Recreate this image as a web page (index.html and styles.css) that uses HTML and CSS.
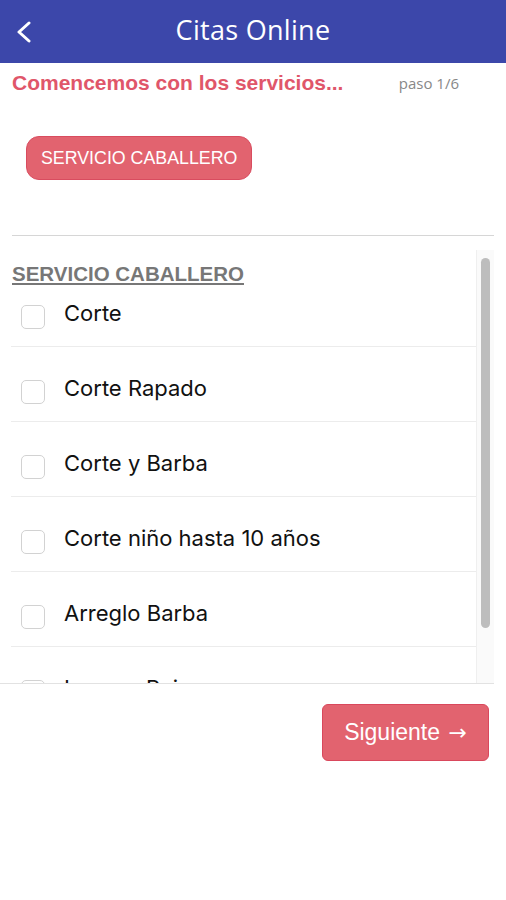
FILE: index.html
```html
<!DOCTYPE html>
<html lang="es">
<head>
  <meta charset="UTF-8" />
  <meta name="viewport" content="width=device-width, initial-scale=1.0"/>
  <title>Citas Online</title>
  <link rel="stylesheet" href="styles.css">
</head>
<body>

<header class="topbar">
  <button class="back" aria-label="Volver">
    <svg width="16" height="22" viewBox="0 0 16 22"><polyline points="13,2 3,11 13,20" fill="none" stroke="#fff" stroke-width="3" stroke-linecap="round" stroke-linejoin="round"/></svg>
  </button>
  <h1>Citas Online</h1>
  <span></span>
</header>

<div class="intro">
  <h2>Comencemos con los servicios...</h2>
  <span class="step">paso 1/6</span>
</div>

<div class="chips">
  <button class="chip">SERVICIO CABALLERO</button>
</div>

<hr class="divider" />

<div class="services">
  <div class="services-list">
    <h3>SERVICIO CABALLERO</h3>
    <label class="service"><span class="check"></span>Corte</label>
    <label class="service"><span class="check"></span>Corte Rapado</label>
    <label class="service"><span class="check"></span>Corte y Barba</label>
    <label class="service"><span class="check"></span>Corte niño hasta 10 años</label>
    <label class="service"><span class="check"></span>Arreglo Barba</label>
    <label class="service"><span class="check"></span>Lavar y Peinar</label>
  </div>
  <div class="track"><div class="thumb"></div></div>
</div>

<div class="actions">
  <button class="next">Siguiente <span class="arrow">→</span></button>
</div>

</body>
</html>
```

FILE: styles.css
```css
body {
  margin: 0;
  font-family: "Liberation Sans", Arial, sans-serif;
  background: #fff;
  color: #111;
}
.topbar {
  height: 63px;
  background: #3c47aa;
  display: grid;
  grid-template-columns: 50px 1fr 50px;
  align-items: center;
}
.back {
  background: none;
  border: none;
  padding: 0 0 0 16px;
  height: 24px;
  display: flex;
  align-items: center;
}
.topbar h1 {
  margin: 0 0 4px 0;
  text-align: center;
  color: #fff;
  font-family: "Open Sans", sans-serif;
  font-weight: 500;
  font-size: 27px;
  letter-spacing: 0.3px;
}
.intro {
  display: flex;
  justify-content: space-between;
  align-items: center;
  padding: 7px 47px 0 12px;
  height: 26px;
}
.intro h2 {
  margin: 0;
  font-size: 21px;
  font-weight: bold;
  color: #e0566a;
}
.step {
  font-family: "Open Sans", sans-serif;
  font-size: 15px;
  color: #888;
}
.chips {
  padding: 40px 0 0 26px;
}
.chip {
  height: 44px;
  padding: 0 14px;
  border: 1px solid #d94c5f;
  border-radius: 13px;
  background: #e2636f;
  color: #fff;
  font-family: "Liberation Sans", Arial, sans-serif;
  font-size: 17.8px;
}
.divider {
  margin: 55px 12px 0 12px;
  border: none;
  border-top: 1px solid #d6d6d6;
}
.services {
  margin-top: 14px;
  height: 433px;
  width: 494px;
  border-bottom: 1px solid #e2e2e2;
  display: flex;
  overflow: hidden;
}
.services-list {
  flex: 1;
  padding: 12px 0 0 11px;
  border-right: 1px solid #efefef;
}
.services-list h3 {
  margin: 0;
  padding-left: 1px;
  height: 24px;
  line-height: 24px;
  font-size: 20.5px;
  color: #777;
  text-decoration: underline;
}
.service {
  display: flex;
  align-items: flex-start;
  box-sizing: border-box;
  height: 75px;
  padding-top: 28px;
  border-bottom: 1px solid #ececec;
  font-family: "Inter", sans-serif;
  font-size: 22px;
  line-height: 26px;
  color: #111;
}
.service:first-of-type {
  height: 61px;
  padding-top: 14px;
}
.check {
  width: 22px;
  height: 22px;
  margin: 5px 19px 0 10px;
  border: 1.5px solid #d2d2d2;
  border-radius: 5px;
}
.track {
  width: 17px;
  background: #fafafa;
  padding-top: 8px;
}
.thumb {
  width: 9px;
  height: 370px;
  margin-left: 4px;
  border-radius: 5px;
  background: #bdbdbd;
}
.actions {
  display: flex;
  justify-content: flex-end;
  padding: 20px 17px 0 0;
}
.next {
  width: 167px;
  height: 57px;
  border: 1px solid #d9485c;
  border-radius: 6px;
  background: #e2636f;
  color: #fff;
  font-family: "Liberation Sans", Arial, sans-serif;
  font-size: 23px;
}
.arrow {
  font-family: "DejaVu Sans", sans-serif;
  font-size: 22px;
  margin-left: 2px;
}
```
